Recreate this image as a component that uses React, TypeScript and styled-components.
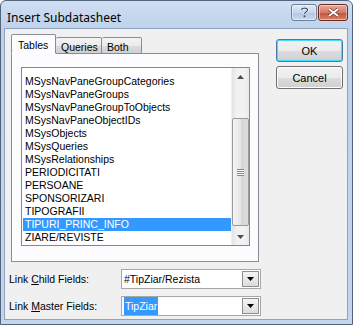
import styled, { createGlobalStyle } from 'styled-components';

const GlobalStyle = createGlobalStyle`
  html, body {
    margin: 0;
    padding: 0;
    background: #ffffff;
  }
  body {
    font-family: "Liberation Sans", Arial, sans-serif;
    font-size: 10.5px;
    color: #000000;
  }
`;

const Window = styled.div`
  width: 353px;
  height: 325px;
  box-sizing: border-box;
  display: flex;
  flex-direction: column;
  border: 1px solid #52637c;
  border-radius: 6px 6px 0 0;
  background: linear-gradient(#cfdff2, #bdd1ea 30px, #c3d6ee);
  overflow: hidden;
`;

const TitleBar = styled.div`
  height: 27px;
  display: flex;
  align-items: flex-start;
  padding: 3px 4px 0 6px;
  box-sizing: border-box;
`;

const Title = styled.div`
  flex: 1;
  padding-top: 5px;
  font-family: "Noto Sans", "Liberation Sans", sans-serif;
  font-size: 12px;
  color: #000000;
`;

const CaptionButton = styled.div<{ $close?: boolean }>`
  width: ${p => (p.$close ? 30 : 26)}px;
  height: 17px;
  box-sizing: border-box;
  display: flex;
  align-items: center;
  justify-content: center;
  border: 1px solid ${p => (p.$close ? '#6d2b20' : '#6c7f9b')};
  border-radius: 3px;
  margin-left: ${p => (p.$close ? 1 : 0)}px;
  background: ${p =>
    p.$close
      ? 'linear-gradient(#e9a99c, #d47a67 50%, #c2503a 51%, #d8826c)'
      : 'linear-gradient(#dfe9f5, #c5d6ec 50%, #b2c7e2 51%, #c9d9ee)'};
  box-shadow: inset 0 0 0 1px rgba(255, 255, 255, 0.45);
`;

const Client = styled.div`
  flex: 1;
  display: flex;
  margin: 0 4px 4px 3px;
  padding: 5px 7px 0 6px;
  background: #f0f0f0;
  border: 1px solid #8fa3bf;
`;

const LeftColumn = styled.div`
  width: 250px;
  display: flex;
  flex-direction: column;
`;

const TabStrip = styled.div`
  display: flex;
  align-items: flex-end;
  height: 20px;
  position: relative;
  z-index: 1;
  margin-bottom: -1px;
`;

const Tab = styled.div<{ $active?: boolean; $w: number }>`
  width: ${p => p.$w}px;
  height: ${p => (p.$active ? 20 : 17)}px;
  box-sizing: border-box;
  border: 1px solid #898c95;
  border-bottom: ${p => (p.$active ? '1px solid #fcfcfe' : '1px solid #898c95')};
  border-left: ${p => (p.$active ? '1px solid #898c95' : 'none')};
  border-radius: 2px 2px 0 0;
  background: ${p => (p.$active ? '#fcfcfe' : 'linear-gradient(#f3f3f3, #ebebeb 50%, #dddddd 51%, #cfcfcf)')};
  padding: ${p => (p.$active ? '4px 0 0 6px' : '3px 0 0 5px')};
`;

const Panel = styled.div`
  width: 248px;
  height: 209px;
  box-sizing: border-box;
  border: 1px solid #898c95;
  background: #fcfcfe;
  padding: 13px 0 0 9px;
`;

const ListBox = styled.div`
  width: 229px;
  height: 179px;
  box-sizing: border-box;
  border: 1px solid #828790;
  background: #ffffff;
  display: flex;
`;

const Items = styled.div`
  flex: 1;
  padding: 7px 0 0 1px;
  overflow: hidden;
`;

const Item = styled.div<{ $selected?: boolean }>`
  height: 13px;
  line-height: 13px;
  padding-left: 2px;
  white-space: nowrap;
  background: ${p => (p.$selected ? '#3399ff' : 'transparent')};
  color: ${p => (p.$selected ? '#ffffff' : '#000000')};
`;

const ScrollBar = styled.div`
  width: 17px;
  display: flex;
  flex-direction: column;
  background: linear-gradient(90deg, #e3e3e3, #f2f2f2 30%, #f2f2f2 70%, #e9e9e9);
  border-left: 1px solid #f0f0f0;
`;

const ArrowCell = styled.div`
  height: 17px;
  display: flex;
  align-items: center;
  justify-content: center;
`;

const Thumb = styled.div`
  margin: 33px 0 0 0;
  height: 108px;
  box-sizing: border-box;
  border: 1px solid #9a9a9a;
  border-radius: 2px;
  background: linear-gradient(90deg, #f3f3f3, #e6e6e6 50%, #d6d6d6 51%, #dcdcdc);
  display: flex;
  align-items: center;
  justify-content: center;
`;

const Grip = styled.div`
  width: 7px;
  height: 7px;
  background: repeating-linear-gradient(#8a8a8a 0 1px, #f4f4f4 1px 2px);
`;

const Spacer = styled.div`
  flex: 1;
`;

const Fields = styled.div`
  margin: 7px 0 0 -2px;
  display: flex;
  flex-direction: column;
  gap: 7px;
`;

const FieldRow = styled.div`
  display: flex;
  align-items: center;
  height: 20px;
`;

const Label = styled.div`
  width: 112px;
`;

const Combo = styled.div`
  width: 140px;
  height: 20px;
  box-sizing: border-box;
  border: 1px solid #a7a7a7;
  background: #ffffff;
  display: flex;
  align-items: center;
  padding: 0 1px;
`;

const ComboText = styled.div`
  flex: 1;
  padding-left: 1px;
  white-space: nowrap;
`;

const Highlight = styled.span`
  background: #3399ff;
  color: #ffffff;
  padding: 3px 1px;
`;

const DropButton = styled.div`
  width: 17px;
  height: 16px;
  box-sizing: border-box;
  border: 1px solid #8e8e8e;
  background: linear-gradient(#f4f4f4, #dcdcdc);
  display: flex;
  align-items: center;
  justify-content: center;
`;

const RightColumn = styled.div`
  margin-left: 15px;
  padding-top: 5px;
  display: flex;
  flex-direction: column;
  gap: 4px;
`;

const Button = styled.div<{ $default?: boolean }>`
  width: 67px;
  height: 23px;
  box-sizing: border-box;
  border: 1px solid ${p => (p.$default ? '#3c7fb1' : '#707070')};
  border-radius: 3px;
  background: linear-gradient(#f2f2f2, #ebebeb 50%, #dddddd 51%, #cfcfcf);
  box-shadow: inset 0 0 0 1px ${p => (p.$default ? '#48d8fb' : '#fcfcfc')};
  display: flex;
  align-items: center;
  justify-content: center;
  font-size: 11px;
`;

const tables = [
  'MSysNavPaneGroupCategories',
  'MSysNavPaneGroups',
  'MSysNavPaneGroupToObjects',
  'MSysNavPaneObjectIDs',
  'MSysObjects',
  'MSysQueries',
  'MSysRelationships',
  'PERIODICITATI',
  'PERSOANE',
  'SPONSORIZARI',
  'TIPOGRAFII',
  'TIPURI_PRINC_INFO',
  'ZIARE/REVISTE'
];

function ArrowGlyph({ up }: { up?: boolean }) {
  return (
    <svg width="7" height="4" viewBox="0 0 7 4">
      <path d={up ? 'M0 4 L3.5 0 L7 4 Z' : 'M0 0 L3.5 4 L7 0 Z'} fill="#4d4d4d" />
    </svg>
  );
}

function DropGlyph() {
  return (
    <svg width="7" height="4" viewBox="0 0 7 4">
      <path d="M0 0 L7 0 L3.5 4 Z" fill="#000000" />
    </svg>
  );
}

function App() {
  return (
    <>
      <GlobalStyle />
      <Window>
        <TitleBar>
          <Title>Insert Subdatasheet</Title>
          <CaptionButton>
            <svg width="9" height="11" viewBox="0 0 9 11">
              <path d="M1.5 3 C1.5 0.5 7.5 0.5 7.5 3 C7.5 5 4.5 5 4.5 7" stroke="#ffffff" strokeWidth="2.2" fill="none" />
              <path d="M1.5 3 C1.5 0.5 7.5 0.5 7.5 3 C7.5 5 4.5 5 4.5 7" stroke="#3d4f6a" strokeWidth="1.2" fill="none" />
              <rect x="3.6" y="8.4" width="1.8" height="1.8" fill="#3d4f6a" />
            </svg>
          </CaptionButton>
          <CaptionButton $close>
            <svg width="11" height="9" viewBox="0 0 11 9">
              <path d="M1 1 L10 8 M10 1 L1 8" stroke="#6d2b20" strokeWidth="3.2" />
              <path d="M1 1 L10 8 M10 1 L1 8" stroke="#ffffff" strokeWidth="2" />
            </svg>
          </CaptionButton>
        </TitleBar>
        <Client>
          <LeftColumn>
            <TabStrip>
              <Tab $active $w={45}>Tables</Tab>
              <Tab $w={46}>Queries</Tab>
              <Tab $w={40}>Both</Tab>
            </TabStrip>
            <Panel>
              <ListBox>
                <Items>
                  {tables.map(t => (
                    <Item key={t} $selected={t === 'TIPURI_PRINC_INFO'}>{t}</Item>
                  ))}
                </Items>
                <ScrollBar>
                  <ArrowCell><ArrowGlyph up /></ArrowCell>
                  <Thumb><Grip /></Thumb>
                  <Spacer />
                  <ArrowCell><ArrowGlyph /></ArrowCell>
                </ScrollBar>
              </ListBox>
            </Panel>
            <Fields>
              <FieldRow>
                <Label>Link <u>C</u>hild Fields:</Label>
                <Combo>
                  <ComboText>#TipZiar/Rezista</ComboText>
                  <DropButton><DropGlyph /></DropButton>
                </Combo>
              </FieldRow>
              <FieldRow>
                <Label>Link <u>M</u>aster Fields:</Label>
                <Combo>
                  <ComboText><Highlight>TipZiar</Highlight></ComboText>
                  <DropButton><DropGlyph /></DropButton>
                </Combo>
              </FieldRow>
            </Fields>
          </LeftColumn>
          <RightColumn>
            <Button $default>OK</Button>
            <Button>Cancel</Button>
          </RightColumn>
        </Client>
      </Window>
    </>
  );
}

export default App;
